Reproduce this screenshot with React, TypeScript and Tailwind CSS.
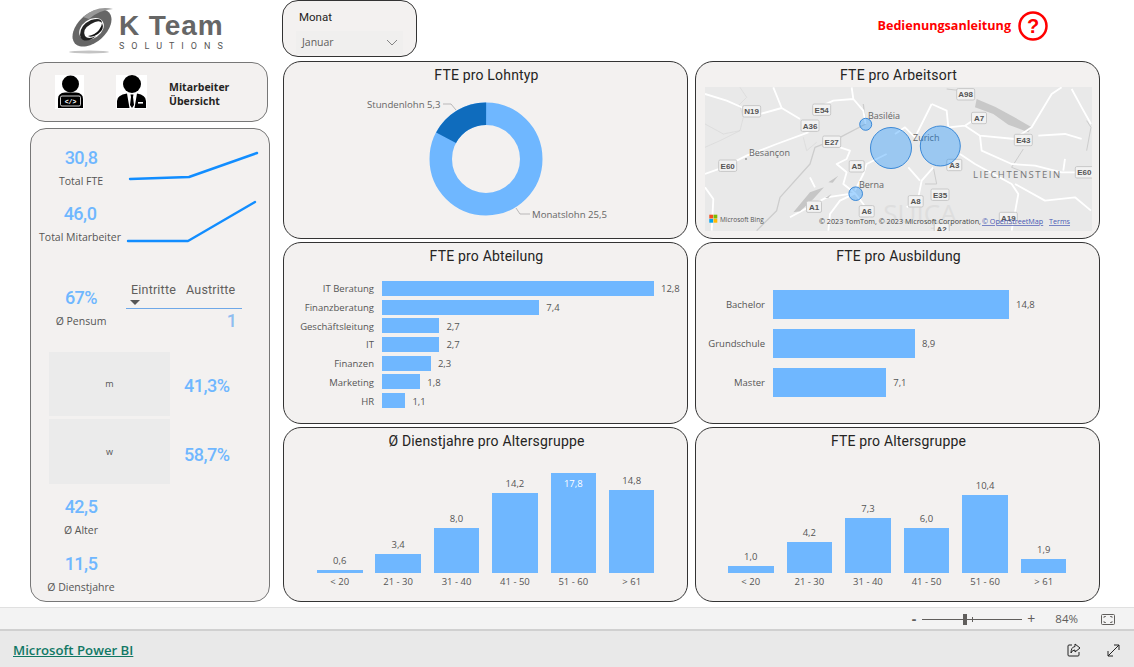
import React from "react";

const din = "font-['Roboto',sans-serif]";
const seg = "font-['Open_Sans',sans-serif]";

function Card({ title, children }: { title: string; children?: React.ReactNode }) {
  return (
    <div className="relative min-h-0 rounded-[18px] border border-[#333] bg-[#f3f1f0] overflow-hidden">
      <h3 className={`${din} text-center text-[14px] leading-[18px] pt-[4px] pl-[2px] tracking-[0.18px] text-[#252423]`}>{title}</h3>
      {children}
    </div>
  );
}

function Kpi({ value, label, w = "w-[100px]" }: { value: string; label: string; w?: string }) {
  return (
    <div className={`${w} text-center`}>
      <div className={`${din} font-medium text-[18px] leading-[22px] tracking-[-0.5px] text-[#6fb7ff]`}>{value}</div>
      <div className={`${seg} text-[10.5px] leading-[14px] mt-[5px] text-[#555]`}>{label}</div>
    </div>
  );
}

function Spark({ points }: { points: string }) {
  return (
    <svg width="135" height="40" viewBox="0 0 135 40" className="shrink-0 overflow-visible">
      <polyline points={points} fill="none" stroke="#118dff" strokeWidth="2.4" strokeLinecap="round" strokeLinejoin="round" />
    </svg>
  );
}

function Donut() {
  const r = 45.25;
  const c = 2 * Math.PI * r;
  const dark = (5.3 / 30.8) * c;
  return (
    <svg width="403" height="155" viewBox="0 0 403 155" className="block">
      <g transform="translate(202,75)">
        <circle r={r} fill="none" stroke="#6fb7ff" strokeWidth="22.5" />
        <circle r={r} fill="none" stroke="#0f6cbd" strokeWidth="22.5" strokeDasharray={`${dark} ${c}`} transform={`rotate(${-90 - (5.3 / 30.8) * 360})`} />
      </g>
      <polyline points="159,20 167,20 172,26" fill="none" stroke="#aaa" strokeWidth="0.8" />
      <polyline points="232,124 236,130 246,130" fill="none" stroke="#aaa" strokeWidth="0.8" />
      <text x="83" y="24" fontSize="9.6" fill="#666" fontFamily="Open Sans">Stundenlohn 5,3</text>
      <text x="248" y="134" fontSize="9.6" fill="#666" fontFamily="Open Sans">Monatslohn 25,5</text>
    </svg>
  );
}

function Map() {
  const shields: [string, number, number][] = [
    ["N19", 46.7, 24.3], ["E54", 116.7, 22.7], ["A36", 105, 38.7], ["E27", 126.7, 54.7], ["E60", 22.7, 78.7],
    ["A5", 151.7, 79.3], ["A1", 109, 119.7], ["A6", 161.7, 124.3], ["A98", 260.7, 7.3], ["A7", 274, 31],
    ["E43", 318.3, 53], ["A3", 249.3, 78], ["E60", 379.3, 85.3], ["E35", 235, 107.7], ["A8", 210.7, 114.3],
    ["A19", 303.3, 131], ["A2", 236.7, 142],
  ];
  return (
    <svg width="387" height="144" viewBox="0 0 387 144" className="block ml-[9px] bg-[#e9e9e9]">
      <text x="215" y="136" fontSize="26" fill="#dedede" textAnchor="middle" fontFamily="Open Sans">SUIÇA</text>
      {/* west half, traced at 3x */}
      <g transform="translate(-5,-3) scale(0.3333)" fill="none" strokeLinejoin="round">
        <g stroke="#d2d2d2" strokeWidth="1.5">
          <path d="M120 10 L140 40 L118 62 L130 100 L120 140 L60 170 L15 190" />
          <path d="M310 160 L320 200 L350 175 M15 120 L70 150 L120 140" />
        </g>
        <path d="M490 60 L497 120 L420 160 L345 190 L330 240 L240 340 L230 380 L170 440" stroke="#cdcdcd" strokeWidth="4" />
        <g stroke="#fff" strokeWidth="5.5">
          <path d="M15 30 L80 50 L130 72 M180 90 L245 72 L220 10 M245 72 L300 105" />
          <path d="M325 145 L230 180 L140 215 L70 250 L15 270 M325 145 L330 125" />
          <path d="M455 10 L460 45 L400 50 L345 75 M460 45 L490 80 L497 120" />
          <path d="M420 190 L450 200 L440 225 L410 240 L440 265 L430 300 L465 328" />
          <path d="M560 210 L500 240 L490 270 L465 320 M330 280 L345 310" />
          <path d="M270 400 L380 340 L460 328 M385 440 L390 390 L420 350 L465 328 L490 360 L510 400" />
          <path d="M15 310 L40 345 L35 440" />
        </g>
        <path d="M280 385 L330 325 L372 310 L340 345 L300 382 Z M375 342 L395 330 L385 342 Z M385 295 L415 275 L398 296 Z" fill="#c6c6c6" />
      </g>
      {/* east half, traced at 3x */}
      <g transform="translate(190,-3) scale(0.3333)" fill="none" strokeLinejoin="round">
        <path d="M245 45 L300 68 L350 95 L410 130 L400 145 L340 122 L295 90 L240 70 Z" fill="#c8c8c8" />
        <path d="M155 15 L240 25 M385 195 L350 250 L380 262 M575 110 L588 130 L575 200 M115 250 L125 300 L90 300" stroke="#cccccc" strokeWidth="3" />
        <g stroke="#fff" strokeWidth="5.5">
          <path d="M110 60 L155 80 L160 130 L210 125 L240 105 M210 125 L255 155 L360 165 L380 150 L410 130 L470 30 L500 10" />
          <path d="M255 155 L260 200 L350 240 L420 245 L500 265 L545 265 M510 225 L505 260" />
          <path d="M195 210 L240 240 L350 300 L370 330 L350 440 M115 250 L80 290 L70 340 L35 370 M40 250 L75 290" />
          <path d="M530 15 L560 70 L588 120 M430 155 L510 150 L560 165 M360 300 L450 350 L540 340 L588 380" />
          <path d="M0 150 L30 130 L60 160 L110 60" />
        </g>
      </g>
      <g fontFamily="Open Sans" fill="#666" fontSize="9">
        <text x="163" y="32">Basiléia</text>
        <text x="208" y="54">Zurich</text>
        <text x="44" y="69">Besançon</text>
        <text x="154" y="101">Berna</text>
        <text x="268" y="91" fontSize="9.5" letterSpacing="1.5" fill="#777">LIECHTENSTEIN</text>
      </g>
      <circle cx="41" cy="72" r="1" fill="#999" />
      {shields.map(([t, x, y], i) => (
        <g key={i}>
          <rect x={x - (t.length > 2 ? 9 : 7.5)} y={y - 5.7} width={t.length > 2 ? 18 : 15} height="11.4" rx="1.5" fill="#f2f2f2" stroke="#c8c8c8" />
          <text x={x} y={y + 2.9} fontSize="8" fontWeight="700" fill="#555" textAnchor="middle" fontFamily="Liberation Sans">{t}</text>
        </g>
      ))}
      <g fill="#118dff" fillOpacity="0.36" stroke="#2b7fd4" strokeWidth="0.9">
        <circle cx="160.7" cy="37.3" r="6" />
        <circle cx="186" cy="61" r="20.5" />
        <circle cx="235.3" cy="59" r="20" />
        <circle cx="150.7" cy="106.7" r="6.8" />
      </g>
      <g>
        <rect x="4.3" y="127.7" width="3.8" height="3.8" fill="#f25022" />
        <rect x="8.5" y="127.7" width="3.8" height="3.8" fill="#7fba00" />
        <rect x="4.3" y="131.9" width="3.8" height="3.8" fill="#00a4ef" />
        <rect x="8.5" y="131.9" width="3.8" height="3.8" fill="#ffb900" />
        <text x="15" y="134.5" fontSize="6.5" fill="#555" fontFamily="Open Sans">Microsoft Bing</text>
      </g>
      <g fontFamily="Open Sans" fontSize="7.2">
        <text x="114" y="137" fill="#444">© 2023 TomTom, © 2023 Microsoft Corporation,</text>
        <text x="277" y="137" fill="#4a5bb5" textDecoration="underline">© OpenStreetMap</text>
        <text x="344" y="137" fill="#4a5bb5" textDecoration="underline">Terms</text>
      </g>
    </svg>
  );
}

function HBars({ rows, scale, labelW, barH, gap, top }: { rows: [string, number][]; scale: number; labelW: number; barH: number; gap: number; top: number }) {
  return (
    <div className="flex flex-col" style={{ gap, paddingTop: top }}>
      {rows.map(([label, v]) => (
        <div key={label} className="flex items-center" style={{ height: barH }}>
          <div className={`${seg} text-right text-[9.5px] text-[#555] pr-[8px] shrink-0 pt-[2px]`} style={{ width: labelW }}>{label}</div>
          <div className="h-full bg-[#6fb7ff] shrink-0" style={{ width: v * scale }} />
          <div className={`${seg} text-[9.5px] text-[#555] ml-[7px] pt-[2px]`}>{v.toFixed(1).replace(".", ",")}</div>
        </div>
      ))}
    </div>
  );
}

function Columns({ data, scale, highlight, left, gap }: { data: [string, number][]; scale: number; highlight?: number; left: number; gap: number }) {
  return (
    <div className="absolute bottom-[6px] right-0 top-[24px]" style={{ left }}>
      <div className="flex h-[121px] items-end" style={{ gap }}>
        {data.map(([label, v], i) => (
          <div key={label} className="relative w-[45.5px] bg-[#6fb7ff]" style={{ height: Math.max(v * scale, 3) }}>
            <span className={`${seg} absolute left-0 right-0 text-center text-[9.5px] leading-[12px] ${i === highlight ? "top-[5px] text-white" : "-top-[15px] text-[#555]"}`}>
              {v.toFixed(1).replace(".", ",")}
            </span>
          </div>
        ))}
      </div>
      <div className="flex mt-[3px]" style={{ gap }}>
        {data.map(([label]) => (
          <div key={label} className={`${seg} w-[45.5px] text-center text-[9.5px] leading-[12px] text-[#555]`}>{label}</div>
        ))}
      </div>
    </div>
  );
}

function Logo() {
  return (
    <div className="flex h-[62px] pt-[5px] pl-[40px] gap-[4px] items-start">
      <svg width="46" height="50" viewBox="0 0 46 50" className="shrink-0">
        <ellipse cx="23" cy="23" rx="23" ry="14" fill="#666" transform="rotate(-42 23 23)" />
        <path d="M14 12 Q28 0 44 4 Q30 5 20 14 Z" fill="#999" />
        <ellipse cx="22.5" cy="24" rx="13.5" ry="9.5" fill="#fff" transform="rotate(-35 22.5 24)" />
        <path d="M11 30 Q11 20 22 15 Q33 12 33 18 Q30 14 22 19 Q13 24 16 31 Q19 35 27 31 Q20 37 14 35 Q11 33 11 30 Z" fill="#222" />
        <path d="M33 18 Q36 24 29 29 Q23 33 19 31 Q26 30 30 25 Q33 21 33 18 Z" fill="#111" />
        <ellipse cx="20" cy="47" rx="20" ry="1.5" fill="#c4c4c4" />
      </svg>
      <div className="pt-[7px]">
        <div className="font-['Liberation_Sans',sans-serif] font-bold text-[28px] leading-[28px] text-[#666] tracking-[0.9px]">K Team</div>
        <div className={`${din} text-[9px] leading-[12px] mt-[0px] text-[#555] tracking-[7px]`}>SOLUTIONS</div>
      </div>
    </div>
  );
}

function Coder() {
  return (
    <svg width="29" height="34" viewBox="0 0 29 34" className="bg-white">
      <circle cx="15.5" cy="9" r="8.5" fill="#000" />
      <path d="M3 33 L3 24 Q3 18 10 17.5 L21 17.5 Q28 18 28 24 L28 33 Z" fill="#000" />
      <rect x="5.5" y="21" width="20" height="10" rx="1.5" fill="#000" stroke="#fff" strokeWidth="0.8" />
      <text x="15.5" y="28.5" fontSize="6.5" fontWeight="700" fill="#fff" textAnchor="middle" fontFamily="Liberation Mono">&lt;/&gt;</text>
    </svg>
  );
}

function Manager() {
  return (
    <svg width="31" height="34" viewBox="0 0 31 34" className="bg-white">
      <circle cx="16" cy="9" r="9" fill="#000" />
      <path d="M1 33 L1 26 Q1 20 11 18.5 L13.5 33 Z M21 18.5 Q30 20 30 26 L30 33 L18.5 33 Z" fill="#000" />
      <path d="M14.5 19.5 L17.5 19.5 L17 22 L18 30 L16 33 L14 30 L15 22 Z" fill="#000" />
      <rect x="22" y="27" width="5" height="1.6" fill="#fff" />
    </svg>
  );
}

export default function App() {
  return (
    <div className={`${seg} w-[1134px] h-[667px] bg-white flex flex-col overflow-hidden`}>
      <div className="h-[607px] flex pl-[29px]">
        <div className="w-[241px] flex flex-col shrink-0">
          <Logo />
          <div className="h-[60px] w-[239px] rounded-[16px] border border-[#777] bg-[#f3f1f0] flex items-center pl-[25px]">
            <Coder />
            <div className="w-[32px]" />
            <Manager />
            <div className="ml-[22px] mt-[4px] text-[10.5px] leading-[14px] font-bold text-[#252423]">
              <div>Mitarbeiter</div>
              <div>Übersicht</div>
            </div>
          </div>
          <div className="mt-[6px] ml-[1px] w-[240px] h-[474px] rounded-[16px] border border-[#777] bg-[#f3f1f0] pt-[18px] flex flex-col">
            <div className="flex items-start">
              <Kpi value="30,8" label="Total FTE" />
              <Spark points="-1,32 58,30 126,6" />
            </div>
            <div className="flex items-start mt-[15px]">
              <Kpi value="46,0" label="Total Mitarbeiter" w="w-[98px]" />
              <Spark points="-1,38 59,38 126,-1" />
            </div>
            <div className="flex items-start mt-[43px]">
              <Kpi value="67%" label="Ø Pensum" />
              <div className="w-[116px] -mt-[5px] -ml-[5px]">
                <div className={`${din} grid grid-cols-2 text-[12.5px] leading-[16px] text-[#605e5c] h-[26px]`}>
                  <div className="pl-[5px] relative tracking-[0.2px]">
                    Eintritte
                    <span className="absolute left-[4px] top-[18px] w-0 h-0 border-x-[5px] border-x-transparent border-t-[5px] border-t-[#555]" />
                  </div>
                  <div className="pl-[2px] tracking-[0.2px]">Austritte</div>
                </div>
                <div className={`${din} font-medium border-t border-[#6fa8e8] text-right pr-[5px] pt-[1px] text-[18px] leading-[22px] text-[#8fbdf0]`}>1</div>
              </div>
            </div>
            <div className="grid grid-cols-[121px_auto] ml-[18px] mt-[20px] gap-y-[3px] items-center">
              <div className="h-[64px] bg-[#ebebeb] flex items-center justify-center text-[9px] text-[#555]">m</div>
              <div className={`${din} font-medium text-[18px] pl-[14px] pt-[2px] tracking-[-0.5px] text-[#6fb7ff]`}>41,3%</div>
              <div className="h-[65px] bg-[#ebebeb] flex items-center justify-center text-[9px] text-[#555]">w</div>
              <div className={`${din} font-medium text-[18px] pl-[14px] pt-[6px] tracking-[-0.5px] text-[#6fb7ff]`}>58,7%</div>
            </div>
            <div className="mt-[12px]"><Kpi value="42,5" label="Ø Alter" /></div>
            <div className="mt-[16px]"><Kpi value="11,5" label="Ø Dienstjahre" /></div>
          </div>
        </div>
        <div className="ml-[13px] w-[817px] flex flex-col shrink-0">
          <div className="h-[61px] flex items-start">
            <div className="-ml-[1px] w-[135px] h-[57px] rounded-[16px] border border-[#333] bg-[#f3f1f0] pt-[9px] px-[16px]">
              <div className={`${din} text-[11.5px] leading-[14px] text-[#252423]`}>Monat</div>
              <div className="mt-[7px] -ml-[3px] h-[23px] w-[107px] bg-[#f0efee] flex items-center justify-between pl-[6px] pr-[5px] text-[10.5px] text-[#605e5c]">
                Januar
                <svg width="12" height="7" viewBox="0 0 12 7"><path d="M1 1 L6 6 L11 1" fill="none" stroke="#777" strokeWidth="0.9" /></svg>
              </div>
            </div>
            <div className="ml-auto mr-[52px] mt-[11px] flex items-center gap-[7px]">
              <span className="text-[12.6px] font-bold text-[#ff0000]">Bedienungsanleitung</span>
              <svg width="30" height="30" viewBox="0 0 30 30">
                <circle cx="15" cy="15" r="13.5" fill="none" stroke="#ff0000" strokeWidth="2.5" />
                <text x="15" y="22" fontSize="20" fontWeight="700" fill="#ff0000" textAnchor="middle" fontFamily="Liberation Sans">?</text>
              </svg>
            </div>
          </div>
          <div className="grid grid-cols-[405px_405px] grid-rows-[178px_182px_175px] gap-x-[7px] gap-y-[3px]">
            <Card title="FTE pro Lohntyp"><Donut /></Card>
            <Card title="FTE pro Arbeitsort"><div className="pt-[3px]"><Map /></div></Card>
            <Card title="FTE pro Abteilung">
              <HBars labelW={98} scale={21.25} barH={15} gap={3.7} top={16} rows={[["IT Beratung", 12.8], ["Finanzberatung", 7.4], ["Geschäftsleitung", 2.7], ["IT", 2.7], ["Finanzen", 2.3], ["Marketing", 1.8], ["HR", 1.1]]} />
            </Card>
            <Card title="FTE pro Ausbildung">
              <HBars labelW={77} scale={15.95} barH={29} gap={10} top={25} rows={[["Bachelor", 14.8], ["Grundschule", 8.9], ["Master", 7.1]]} />
            </Card>
            <Card title="Ø Dienstjahre pro Altersgruppe">
              <Columns left={33} gap={12.9} scale={5.62} highlight={4} data={[["< 20", 0.6], ["21 - 30", 3.4], ["31 - 40", 8], ["41 - 50", 14.2], ["51 - 60", 17.8], ["> 61", 14.8]]} />
            </Card>
            <Card title="FTE pro Altersgruppe">
              <Columns left={32} gap={13.1} scale={7.5} data={[["< 20", 1], ["21 - 30", 4.2], ["31 - 40", 7.3], ["41 - 50", 6], ["51 - 60", 10.4], ["> 61", 1.9]]} />
            </Card>
          </div>
        </div>
      </div>
      <div className="h-[24px] bg-[#f3f3f3] border-t border-[#e0e0e0] border-b-2 border-b-[#d0d0d0] flex items-center justify-end pt-[1px] text-[#605e5c]">
        <span className="text-[14px] leading-none mr-[6px] font-bold">-</span>
        <div className="relative w-[100px] h-px bg-[#605e5c]">
          <span className="absolute left-[41px] -top-[5px] w-[4px] h-[11px] bg-[#605e5c]" />
          <span className="absolute left-[50px] -top-[2px] w-px h-[5px] bg-[#605e5c]" />
        </div>
        <span className="text-[14px] leading-none ml-[5px]">+</span>
        <span className="text-[11.5px] ml-[20px]">84%</span>
        <svg className="ml-[23px] mr-[19px]" width="14" height="11" viewBox="0 0 14 11" fill="none" stroke="#605e5c">
          <rect x="0.5" y="0.5" width="13" height="10" rx="1" />
          <path d="M3 4 V2.5 H5 M9 2.5 H11 V4 M3 7 V8.5 H5 M9 8.5 H11 V7" strokeWidth="0.8" />
        </svg>
      </div>
      <div className="flex-1 bg-[#e9e9e9] flex items-center justify-between pt-[4px] pl-[13px] pr-[14px]">
        <a className="text-[13.2px] font-semibold underline text-[#117865]">Microsoft Power BI</a>
        <div className="flex items-center gap-[26px] -mt-[2px]">
          <svg width="14" height="14" viewBox="0 0 14 14" fill="none" stroke="#222" strokeWidth="1">
            <path d="M5 2 H2 Q1 2 1 3 V12 Q1 13 2 13 H11 Q12 13 12 12 V9" />
            <path d="M8 1 L13 5 L8 9 V7 Q5 7 4 10 Q4 4 8 3.5 Z" />
          </svg>
          <svg width="13" height="13" viewBox="0 0 13 13" fill="none" stroke="#222" strokeWidth="1">
            <path d="M1 12 L12 1 M7 1 H12 V6 M1 7 V12 H6" />
          </svg>
        </div>
      </div>
    </div>
  );
}
